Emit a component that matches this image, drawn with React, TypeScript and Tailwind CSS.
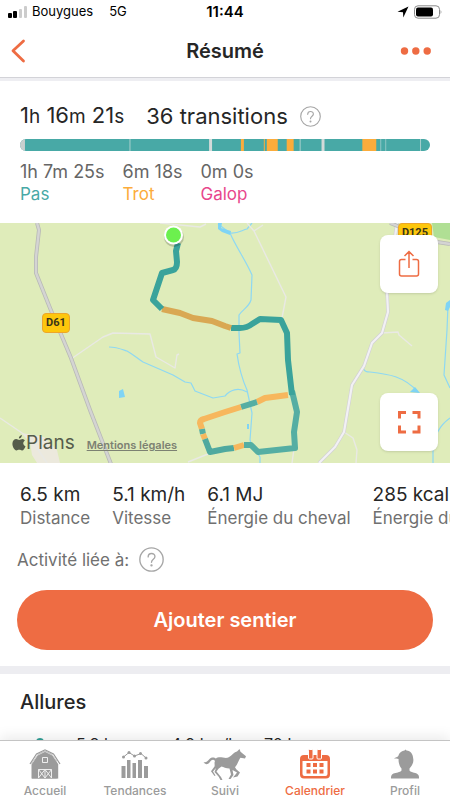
import React from "react"

type Gait = {
    name: string;
    time: string;
    color: string;
}

type Stat = {
    value: string;
    label: string;
}

type Segment = {
    start: number;
    width: number;
    color: string;
}

type Tab = {
    label: string;
    icon: React.ReactNode;
    active?: boolean;
}

const gaits: Gait[] = [
    { name: "Pas", time: "1h 7m 25s", color: "text-[#48a9a6]" },
    { name: "Trot", time: "6m 18s", color: "text-[#fcac3b]" },
    { name: "Galop", time: "0m 0s", color: "text-[#e8468c]" },
]

const stats: Stat[] = [
    { value: "6.5 km", label: "Distance" },
    { value: "5.1 km/h", label: "Vitesse" },
    { value: "6.1 MJ", label: "Énergie du cheval" },
    { value: "285 kcal", label: "Énergie du cavalier" },
]

// everything that is not walk on the timeline, on a 412 unit scale
const segments: Segment[] = [
    { start: 0, width: 5, color: "#c9cfce" },
    { start: 110, width: 1, color: "#a9cfcd" },
    { start: 190, width: 3, color: "#d3dad9" },
    { start: 222, width: 3, color: "#fcac3b" },
    { start: 245, width: 1, color: "#fcac3b" },
    { start: 248, width: 11, color: "#fcac3b" },
    { start: 268, width: 7, color: "#fcac3b" },
    { start: 281, width: 1, color: "#a9cfcd" },
    { start: 303, width: 3, color: "#d3dad9" },
    { start: 344, width: 14, color: "#fcac3b" },
    { start: 362, width: 1, color: "#8fc7c4" },
    { start: 367, width: 1, color: "#8fc7c4" },
    { start: 402, width: 1, color: "#a9cfcd" },
]

const StatusBar = () => (
    <div className="grid grid-cols-3 items-center h-6 px-2 text-[13px] text-black">
        <div className="flex items-center gap-1 whitespace-nowrap">
            <svg width="20" height="12" viewBox="0 0 20 12">
                <rect x="0" y="7" width="4" height="5" rx="1" fill="#000" />
                <rect x="5" y="5" width="4" height="7" rx="1" fill="#000" />
                <rect x="11" y="3" width="3" height="9" rx="1" fill="#ccc" />
                <rect x="16" y="0" width="3" height="12" rx="1" fill="#ccc" />
            </svg>
            <span>Bouygues</span>
            <span className="ml-3">5G</span>
        </div>
        <div className="text-center text-[15px] font-semibold">11:44</div>
        <div className="flex items-center justify-end gap-1">
            <svg width="12" height="12" viewBox="0 0 12 12">
                <path d="M11.5 0.5L0.5 5.8L6 6.2L6.3 11.5Z" fill="#000" />
            </svg>
            <svg width="29" height="14" viewBox="0 0 29 14">
                <rect x="1.5" y="0.8" width="25" height="12.4" rx="3.5" fill="none" stroke="#8a8a8a" />
                <rect x="3" y="2.5" width="17" height="9" rx="2" fill="#000" />
                <path d="M27.6 5Q29.2 7 27.6 9Z" fill="#8a8a8a" />
            </svg>
        </div>
    </div>
)

const Header = () => (
    <header className="grid grid-cols-3 items-center h-[54px] px-2 border-b border-[#d3d3d8]">
        <button aria-label="Retour" className="w-8">
            <svg width="20" height="26" viewBox="0 0 20 26">
                <path d="M15.5 3L5 12.8L15.5 23" fill="none" stroke="#ee6c43" strokeWidth="2.8" strokeLinecap="round" strokeLinejoin="round" />
            </svg>
        </button>
        <h1 className="text-center text-xl leading-6 font-semibold">Résumé</h1>
        <button aria-label="Plus d'options" className="justify-self-end mr-2">
            <svg width="36" height="8" viewBox="0 0 36 8">
                <circle cx="6.5" cy="4" r="3.7" fill="#ee6c43" />
                <circle cx="17.8" cy="4" r="3.7" fill="#ee6c43" />
                <circle cx="29.2" cy="4" r="3.7" fill="#ee6c43" />
            </svg>
        </button>
    </header>
)

const HelpButton = ({ size }: { size: number }) => (
    <button aria-label="Aide">
        <svg className="block" width={size} height={size} viewBox="0 0 24 24" fill="none" stroke="#a6a6a6" strokeWidth="1.3" strokeLinecap="round">
            <circle cx="12" cy="12" r="11.2" />
            <path d="M8.8 9.5C8.8 5.2 15.4 5.3 15.3 9.3C15.2 11.7 12 11.8 12 14.6" />
            <circle cx="12" cy="17.6" r="0.5" fill="#a6a6a6" />
        </svg>
    </button>
)

const Timeline = () => (
    <svg className="block w-full h-3 rounded-full bg-[#48a9a6]" viewBox="0 0 412 12" preserveAspectRatio="none">
        {segments.map((segment) => (
            <rect key={segment.start} x={segment.start} y="0" width={segment.width} height="12" fill={segment.color} />
        ))}
    </svg>
)

const Summary = () => (
    <section className="px-5 py-[18px]">
        <div className="flex items-center text-[22px] leading-8">
            <span>1<small className="text-[19px]">h</small> 16<small className="text-[19px]">m</small> 21<small className="text-[19px]">s</small></span>
            <span className="ml-[22px] mr-3">36 transitions</span>
            <HelpButton size={21} />
        </div>
        <div className="mt-1.5 mb-2.5">
            <Timeline />
        </div>
        <div className="flex gap-[18px] leading-[22px]">
            {gaits.map((gait) => (
                <div key={gait.name}>
                    <p className="text-lg leading-[22px] text-[#666]">{gait.time}</p>
                    <p className={`text-[17px] ${gait.color}`}>{gait.name}</p>
                </div>
            ))}
        </div>
    </section>
)

const MapDrawing = () => (
    <svg className="block w-full h-full" viewBox="0 0 450 240" preserveAspectRatio="xMidYMid slice" fill="none" strokeLinejoin="round">
        <rect width="450" height="240" fill="#dfecba" />
        <path d="M432 0H450V17L434 14Z" fill="#b0df94" />
        <path d="M22 210L44 214L57 227L60 240H37L32 232L30 219Z" fill="#ece9dd" />

        {/* streams and ponds */}
        <g stroke="#8ed8f3" strokeWidth="1.2">
            <path d="M109 124C116 124 121 126 127 128C134 132 138 136 143 139L173 152L185 159L191 160L195 168L213 175L225 173C230 167 238 164 247 169" />
            <path d="M218 1L230 10C236 24 246 38 252 52L251 77C249 84 242 87 239 92V110L240 130L237 131C239 145 243 158 247 167L252 190L250 217C252 225 258 230 260 234V240" />
            <path d="M230 10C238 11 242 7 247 6L252 0" />
            <path d="M363 145C365 149 367 149 370 149C388 151 404 153 418 169" />
            <path d="M448 82L447 107L444 152L450 165M450 195C440 202 434 212 433 227V240" />
        </g>
        <g fill="#7fd4f5">
            <path d="M119 168L123 166L125 174L119 175Z" />
            <path d="M218 0H222L221 5L231 8L230 12L222 9L218 6Z" />
            <path d="M247 201H249V206H247Z" />
            <path d="M410 169L415 164L420 170Z" />
            <path d="M450 77L446 80L445 87L448 88L450 84Z" />
        </g>

        {/* paths and roads */}
        <g stroke="#e9e9e4" strokeWidth="1.4">
            <path d="M71 136L103 114L113 110L150 111L156 134L175 145L177 132L179 131" />
            <path d="M0 195L22 210L37 225L47 240" />
            <path d="M160 0L200 4L206 1M247 0L254 8L286 74L282 95M254 8L263 2" />
            <path d="M382 110L398 109L399 112L412 123M344 209L353 215L357 227L356 240M294 226L292 240M188 239L208 231" />
        </g>
        <path d="M397 0L387 69L388 89L382 110L372 120L364 143L352 162L344 209L335 224L319 240" stroke="#d2d0d6" strokeWidth="3.4" />
        <path d="M397 0L387 69L388 89L382 110L372 120L364 143L352 162L344 209L335 224L319 240" stroke="#f2f1f4" strokeWidth="2.2" />
        <path d="M390 0L437 19L450 21M37 0L39 7L36 34V50L50 85L71 135L90 187L111 241" stroke="#b8b9b6" strokeWidth="4" />
        <path d="M390 0L437 19L450 21M37 0L39 7L36 34V50L50 85L71 135L90 187L111 241" stroke="#d4d4d3" strokeWidth="2.4" />

        {/* the ride */}
        <g strokeWidth="6">
            <path d="M288 172L265 175L257 179" stroke="#f7b75d" />
            <path d="M257 179L241 184" stroke="#55aea3" />
            <path d="M241 184L225 189L204 196Q200 197 200 200L202 206" stroke="#f7b75d" />
            <path d="M202 206L203 211" stroke="#55aea3" />
            <path d="M203 211L205 216" stroke="#f7b75d" />
            <path d="M205 216L210 229L225 226L234 225" stroke="#4fa99f" />
            <path d="M234 225L244 222" stroke="#f7b75d" />
            <path d="M244 222H251L258 229L295 225L294 209L297 189L292 168" stroke="#55aea3" />
            <path d="M231 105H240Q247 105 252 101L260 96L281 97L287 110L288 137L292 172" stroke="#3aa39b" />
            <path d="M162 86L180 90L193 95L212 98L225 103L231 105" stroke="#d9a853" />
            <path d="M178 20L176 28L177 39Q177 46 173 47L162 50L153 77L162 86" stroke="#3aa39b" />
        </g>
        <circle cx="174" cy="14" r="10" fill="#000" fillOpacity="0.18" />
        <circle cx="173.5" cy="12" r="9.5" fill="#fff" />
        <circle cx="173.5" cy="12" r="7.5" fill="#6cf04e" />
    </svg>
)

const RoadBadge = ({ name }: { name: string }) => (
    <span className="block rounded border border-[#eda52b] bg-[#fdc70c] px-[3px] text-center font-['Roboto',sans-serif] text-[11px] leading-[18px] font-bold text-[#3a3518]">
        {name}
    </span>
)

const RideMap = () => (
    <section className="relative h-60 overflow-hidden">
        <MapDrawing />
        <div className="absolute left-[42px] top-[90px]"><RoadBadge name="D61" /></div>
        <div className="absolute right-[18px] top-0"><RoadBadge name="D125" /></div>
        <div className="absolute bottom-2 left-3 flex items-end gap-3 text-[#555c4b]">
            <div className="flex items-center text-[19px] leading-6">
                <svg width="14" height="16" viewBox="0 0 14 16" fill="#555c4b">
                    <path d="M9.9 0C10 1.8 8.6 3.5 6.9 3.5C6.7 1.8 8.2 0.2 9.9 0Z" />
                    <path d="M12.9 5.4C10.5 7 10.8 10 13.5 11.2C12.9 13 11.5 15.5 10 15.5C8.9 15.5 8.5 14.8 7.2 14.8C5.9 14.8 5.4 15.5 4.4 15.5C2.5 15.5 0.4 11.8 0.4 8.8C0.4 5.8 2.3 4.1 4.2 4.1C5.5 4.1 6.4 4.9 7.2 4.9C8 4.9 9.1 4 10.6 4C11.6 4.1 12.4 4.6 12.9 5.4Z" />
                </svg>
                Plans
            </div>
            <a href="#legal" className="text-[11px] leading-5 font-semibold text-[#7c8172] underline">Mentions légales</a>
        </div>
        <button aria-label="Partager" className="absolute right-3 top-3 flex size-[58px] items-center justify-center rounded-lg bg-white shadow-sm">
            <svg width="22" height="28" viewBox="0 0 22 28" fill="none" stroke="#ee6c43" strokeWidth="1.5">
                <path d="M7.5 9.5H3.5Q1.5 9.5 1.5 11.5V24Q1.5 26 3.5 26H18.5Q20.5 26 20.5 24V11.5Q20.5 9.5 18.5 9.5H14.5M11 18V2M6.5 6L11 1.6L15.5 6" />
            </svg>
        </button>
        <button aria-label="Plein écran" className="absolute right-3 bottom-3 flex size-[58px] items-center justify-center rounded-lg bg-white shadow-sm">
            <svg width="24" height="24" viewBox="0 0 24 24" fill="none" stroke="#ee6c43" strokeWidth="3">
                <path d="M2.5 8.5V2.5H9M15.5 2.5H22V8.5M22 15.5V22H15.5M9 22H2.5V15.5" />
            </svg>
        </button>
    </section>
)

const Stats = () => (
    <section className="pt-5">
        <div className="flex gap-[22px] overflow-hidden px-5 whitespace-nowrap">
            {stats.map((stat) => (
                <div key={stat.value}>
                    <p className="text-[19px] leading-6">{stat.value}</p>
                    <p className="text-[17px] leading-[22px] text-[#707070]">{stat.label}</p>
                </div>
            ))}
        </div>
        <div className="my-[18px] flex items-center gap-2.5 px-[17px] text-[17px] leading-6 text-[#707070]">
            Activité liée à:
            <HelpButton size={25} />
        </div>
        <div className="px-[17px]">
            <button className="h-[60px] w-full rounded-full bg-[#ee6c43] text-xl font-semibold text-white">
                Ajouter sentier
            </button>
        </div>
    </section>
)

const Paces = () => (
    <section className="px-5 pt-4">
        <h2 className="text-xl leading-6 font-medium">Allures</h2>
        <div className="mt-5 grid grid-cols-[40px_95px_93px_1fr] pl-4 text-base leading-5">
            <span className="mt-1 size-2 rounded-full bg-[#2f9f97]" />
            <span>5.8 km</span>
            <span>4.9 km/h</span>
            <span>70 bpm</span>
        </div>
    </section>
)

const BarnIcon = () => (
    <svg width="32" height="30" viewBox="0 0 32 30" fill="none">
        <path d="M4 12L9 5L16 1.5L23 5L28 12V29.5H2.5V14Z" fill="#9b9b9b" />
        <path d="M1 15L7.5 5L16 0.8L24.5 5L31 15" stroke="#9b9b9b" strokeWidth="1.2" />
        <path d="M2.5 15.5L8.5 6.2L16 2.5L23.5 6.2L29.5 15.5V29.5H28V14" fill="#9b9b9b" stroke="#fff" strokeWidth="0.6" />
        <path d="M4 14L9 7L16 3.5L23 7L29 15V29.5H3V15Z" fill="#9b9b9b" />
        <path d="M13.5 8.5H18.5V13.5H13.5ZM9.5 29V20.5H22.5V29M16 20.5V29M9.5 20.5L16 29L22.5 20.5M9.5 29L16 20.5L22.5 29" stroke="#eee" strokeWidth="1" />
    </svg>
)

const TrendsIcon = () => (
    <svg width="28" height="30" viewBox="0 0 28 30" fill="#9b9b9b">
        <path d="M0.5 17H4.5V29H0.5ZM6 11H9.5V29H6ZM11.5 14H15V29H11.5ZM17 11H21V29H17ZM23 17H27V29H23Z" />
        <path d="M2.5 8L8 3.5L13.5 7L20 4.5L25 9" fill="none" stroke="#9b9b9b" strokeWidth="1" />
        <circle cx="2.5" cy="8" r="1.5" />
        <circle cx="8" cy="3.5" r="1.5" />
        <circle cx="13.5" cy="7" r="1.5" />
        <circle cx="19.5" cy="4.5" r="1.5" />
        <circle cx="25" cy="9" r="1.5" />
    </svg>
)

const HorseIcon = () => (
    <svg width="44" height="32" viewBox="0 0 44 32" fill="#9b9b9b">
        <path d="M0.5 13C3 14.2 4.5 12.2 6.5 10C9 7.5 11.5 8.5 13 9.5C16 7 21 9.5 24.5 8.8C28 8 30 3.5 34 2.5L36.5 0L37.5 2.8L43 7.2L42 9.4L37.5 8.8C36 10 35 15 32 18.2L33.5 20.5L37 23.5L34.5 27.5L30 28.5L32.5 25.5L34 23.5L29.5 21L30.5 26L27.5 30H25.5L28 25.5L26.5 19.5C23 19.5 20.5 18 18.5 17.5L15.5 19.7L13.5 22.5L18 28L19.5 31H17.5L15.5 27.5L11.5 23L13 19L10 22.5L12.5 26.5L11.5 27L8 22.3L11.5 17.5C12 15.5 11 14 12 12C10 9.5 8 11.5 6.5 13.5C4.5 16 2 15.5 0.5 13Z" />
    </svg>
)

const CalendarIcon = () => (
    <svg width="32" height="30" viewBox="0 0 32 30" fill="#ee6c43">
        <path fillRule="evenodd" d="M5 6H27Q31 6 31 10V25.5Q31 29.5 27 29.5H5Q1 29.5 1 25.5V10Q1 6 5 6ZM3.5 12V25Q3.5 27 5.5 27H26.5Q28.5 27 28.5 25V12Z" />
        <rect x="9.5" y="0.5" width="4.5" height="9.5" rx="1" stroke="#fff" strokeWidth="1" />
        <rect x="18" y="0.5" width="4.5" height="9.5" rx="1" stroke="#fff" strokeWidth="1" />
        <path d="M7.5 14H11.5V18H7.5ZM14 14H18V18H14ZM20.5 14H24.5V18H20.5ZM7.5 20.5H11.5V24.5H7.5ZM14 20.5H18V24.5H14ZM20.5 20.5H24.5V24.5H20.5Z" />
    </svg>
)

const ProfileIcon = () => (
    <svg width="30" height="30" viewBox="0 0 30 30" fill="#9b9b9b">
        <path d="M4 9.5C5.5 8 7.5 8.2 8.3 7C9.5 3 12 1.8 14.5 1.4L15.5 0.6L16.5 1.4C20.8 1.8 23 5 23.2 9.5C24 13 22 17 19.5 19.5V21.5C21 23.5 25 23.5 27 24.8C29 26 29 27.5 29 29.5H1C1 27.5 1 26 3.5 24.6C6 23.5 10 23.5 11.5 21.5V19.5C9.5 17.5 8.3 13 8.6 10C7 9.5 5.5 9.5 4 9.5Z" />
    </svg>
)

const tabs: Tab[] = [
    { label: "Accueil", icon: <BarnIcon /> },
    { label: "Tendances", icon: <TrendsIcon /> },
    { label: "Suivi", icon: <HorseIcon /> },
    { label: "Calendrier", icon: <CalendarIcon />, active: true },
    { label: "Profil", icon: <ProfileIcon /> },
]

const TabBar = () => (
    <nav className="z-10 grid grid-cols-5 border-t border-[#c4c4c4] bg-white pt-2 shadow-[0_-4px_12px_rgba(0,0,0,0.08)]">
        {tabs.map((tab) => (
            <button key={tab.label} className={`flex flex-col items-center text-xs leading-[18px] font-medium ${tab.active ? "text-[#ee6c43]" : "text-[#9b9b9b]"}`}>
                <span className="flex h-[33px] items-start">{tab.icon}</span>
                {tab.label}
            </button>
        ))}
    </nav>
)

const App: React.FC = () => {
    return (
        <div className="flex h-screen flex-col bg-white font-['Inter',sans-serif] text-[#262626]">
            <StatusBar />
            <Header />
            <main className="min-h-0 flex-1 overflow-y-auto [scrollbar-width:none]">
                <div className="h-[3px] bg-[#eeeef2]" />
                <Summary />
                <RideMap />
                <Stats />
                <div className="mt-4 h-2 bg-[#ededf1]" />
                <Paces />
            </main>
            <TabBar />
        </div>
    )
}

export default App
